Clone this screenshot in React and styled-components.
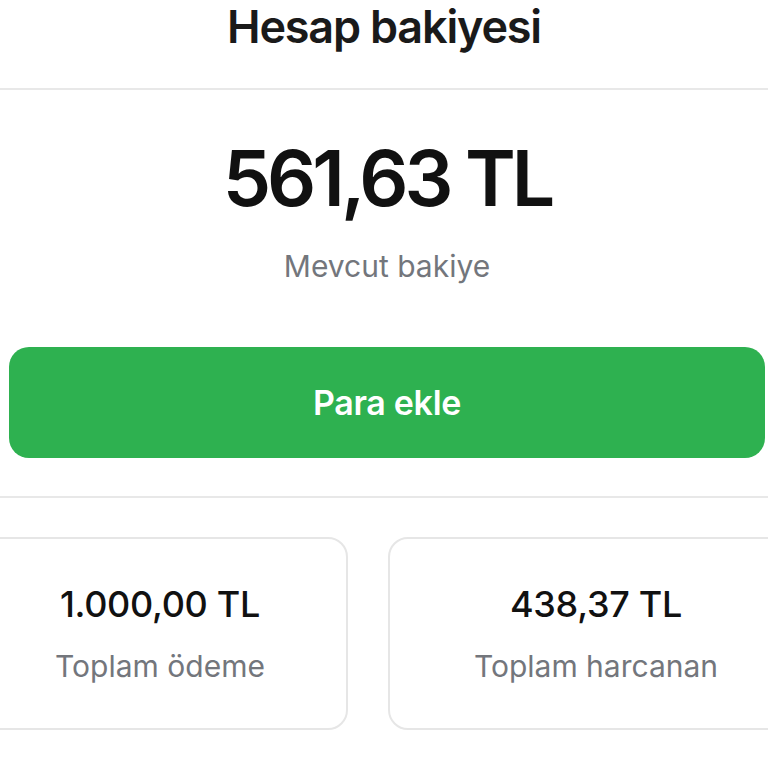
import React from 'react';
import styled, { createGlobalStyle } from 'styled-components';

const GlobalStyle = createGlobalStyle`
  html, body {
    margin: 0;
    padding: 0;
    background: #ffffff;
    overflow: hidden;
  }
  body {
    font-family: Inter, "Noto Sans", "Liberation Sans", sans-serif;
    color: #111111;
  }
`;

const Page = styled.div`
  width: 768px;
  height: 768px;
  overflow: hidden;
  background: #ffffff;
`;

const Header = styled.header`
  height: 90px;
  box-sizing: border-box;
  padding-top: 7px;
  border-bottom: 2px solid #e8e8e8;
  text-align: center;
`;

const Title = styled.h1`
  margin: 0;
  font-size: 45px;
  line-height: 40px;
  font-weight: 600;
  color: #1a1a1a;
  letter-spacing: -1.2px;
`;

const BalanceSection = styled.section`
  display: flex;
  flex-direction: column;
  align-items: center;
  padding: 50px 3px 38px 9px;
  border-bottom: 2px solid #e8e8e8;
`;

const Amount = styled.div`
  font-size: 77px;
  line-height: 1;
  font-weight: 600;
  letter-spacing: -4px;
  color: #111111;
`;

const Caption = styled.div`
  margin-top: 34px;
  font-size: 30px;
  line-height: 1;
  font-weight: 400;
  color: #73767c;
`;

const AddButton = styled.button`
  margin-top: 66px;
  align-self: stretch;
  height: 111px;
  border: none;
  border-radius: 20px;
  background: #2eb150;
  color: #ffffff;
  font-family: inherit;
  font-size: 34px;
  font-weight: 600;
  letter-spacing: -0.3px;
  cursor: pointer;
`;

const Stats = styled.div`
  display: grid;
  grid-template-columns: 376px 416px;
  gap: 40px;
  margin: 39px 0 0 -28px;
`;

const StatCard = styled.div`
  height: 193px;
  box-sizing: border-box;
  border: 2px solid #e6e6e6;
  border-radius: 20px;
  display: flex;
  flex-direction: column;
  align-items: center;
  justify-content: center;
  gap: 29px;
`;

const StatValue = styled.div`
  font-size: 36px;
  line-height: 1;
  font-weight: 500;
  color: #111111;
  letter-spacing: -0.3px;
`;

const StatLabel = styled.div`
  font-size: 30px;
  line-height: 1;
  color: #73767c;
`;

const stats = [
  { value: '1.000,00 TL', label: 'Toplam ödeme' },
  { value: '438,37 TL', label: 'Toplam harcanan' },
];

export default function App() {
  return (
    <Page>
      <GlobalStyle />
      <Header>
        <Title>Hesap bakiyesi</Title>
      </Header>
      <BalanceSection>
        <Amount>561,63 TL</Amount>
        <Caption>Mevcut bakiye</Caption>
        <AddButton>Para ekle</AddButton>
      </BalanceSection>
      <Stats>
        {stats.map(s => (
          <StatCard key={s.label}>
            <StatValue>{s.value}</StatValue>
            <StatLabel>{s.label}</StatLabel>
          </StatCard>
        ))}
      </Stats>
    </Page>
  );
}
